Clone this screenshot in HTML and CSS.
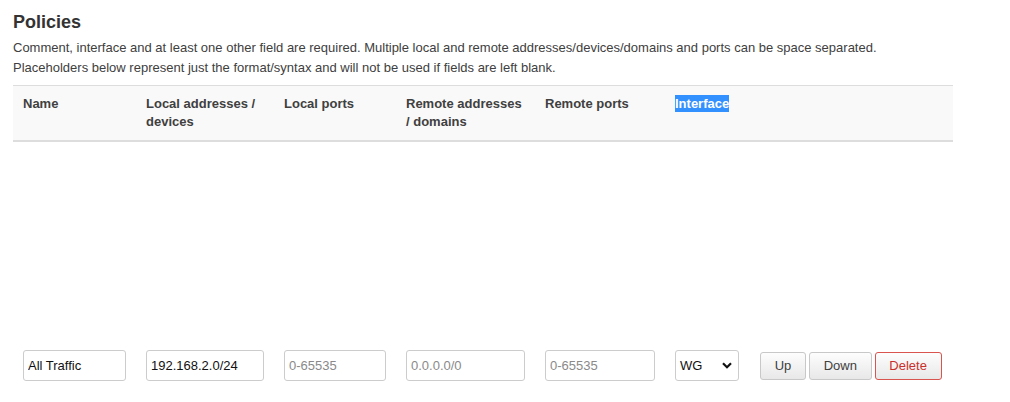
FILE: index.html
```html
<!DOCTYPE html>
<html>
<head>
<meta charset="utf-8">
<link rel="stylesheet" href="styles.css">
</head>
<body>
<div class="section">
  <h3 class="title">Policies</h3>
  <div class="desc">Comment, interface and at least one other field are required. Multiple local and remote addresses/devices/domains and ports can be space separated.<br>Placeholders below represent just the format/syntax and will not be used if fields are left blank.</div>
  <table class="tbl">
    <thead>
      <tr>
        <th class="c-name">Name</th>
        <th class="c-laddr">Local addresses / devices</th>
        <th class="c-lport">Local ports</th>
        <th class="c-raddr">Remote addresses / domains</th>
        <th class="c-rport">Remote ports</th>
        <th class="c-iface"><span class="sel">Interface</span></th>
        <th class="c-act"></th>
      </tr>
    </thead>
    <tbody>
      <tr class="spacer"><td colspan="7"></td></tr>
      <tr class="row">
        <td><input class="inp" type="text" value="All Traffic"></td>
        <td><input class="inp" type="text" value="192.168.2.0/24"></td>
        <td><input class="inp" type="text" placeholder="0-65535"></td>
        <td><input class="inp" type="text" placeholder="0.0.0.0/0"></td>
        <td><input class="inp" type="text" placeholder="0-65535"></td>
        <td><div class="select">WG<svg class="chev" viewBox="0 0 10 7" width="10" height="7"><path d="M1 1.2 L5 5.2 L9 1.2" fill="none" stroke="#111" stroke-width="2.2"/></svg></div></td>
        <td class="act">
          <button class="btn">Up</button><button class="btn">Down</button><button class="btn btn-del">Delete</button>
        </td>
      </tr>
    </tbody>
  </table>
</div>
</body>
</html>
```
FILE: styles.css
```css
html, body {
  margin: 0;
  padding: 0;
  background: #fff;
}
body {
  font-family: "Liberation Sans", Arial, sans-serif;
  color: #404040;
}
.section {
  padding: 11px 13px 0 13px;
}
.title {
  margin: 0;
  font-size: 18px;
  line-height: 22px;
  font-weight: bold;
  color: #333;
}
.desc {
  margin-top: 5px;
  font-size: 13px;
  line-height: 20px;
  color: #404040;
}
.tbl {
  margin-top: 7px;
  width: 940px;
  border-collapse: collapse;
  table-layout: fixed;
}
.tbl th {
  text-align: left;
  vertical-align: top;
  font-size: 13px;
  font-weight: bold;
  line-height: 18px;
  padding: 9px 10px 9px 10px;
  background: #f9f9f9;
  border-top: 1px solid #ddd;
  border-bottom: 2px solid #ddd;
  color: #404040;
}
.c-name { width: 103px; }
.c-laddr { width: 118px; }
.c-lport { width: 102px; }
.c-raddr { width: 119px; }
.c-rport { width: 110px; }
.c-iface { width: 65px; }
.sel {
  background: #3390ff;
  color: #fff;
  padding: 1px 0;
}
.spacer td {
  height: 208px;
  padding: 0;
}
.row td {
  padding: 0 10px;
  vertical-align: middle;
}
.inp {
  box-sizing: border-box;
  width: 100%;
  height: 31px;
  margin: 0;
  padding: 0 4px;
  border: 1px solid #ccc;
  border-radius: 3px;
  font-family: "Liberation Sans", Arial, sans-serif;
  font-size: 13px;
  color: #111;
  background: #fff;
}
.inp::placeholder {
  color: #8a8a8a;
}
.select {
  box-sizing: border-box;
  width: 64px;
  height: 31px;
  border: 1px solid #ccc;
  border-radius: 3px;
  display: flex;
  align-items: center;
  justify-content: space-between;
  padding: 0 6px 0 4px;
  font-size: 13px;
  color: #111;
}
.act {
  white-space: nowrap;
}
.btn {
  box-sizing: border-box;
  height: 28px;
  margin: 0 3px 0 0;
  padding: 0 13.7px;
  border: 1px solid #c8c8c8;
  border-radius: 3px;
  background: linear-gradient(#fdfdfd, #e8e8e8);
  font-family: "Liberation Sans", Arial, sans-serif;
  font-size: 13px;
  color: #404040;
}
.btn-del {
  border-color: #d9534f;
  color: #c9302c;
}
```
